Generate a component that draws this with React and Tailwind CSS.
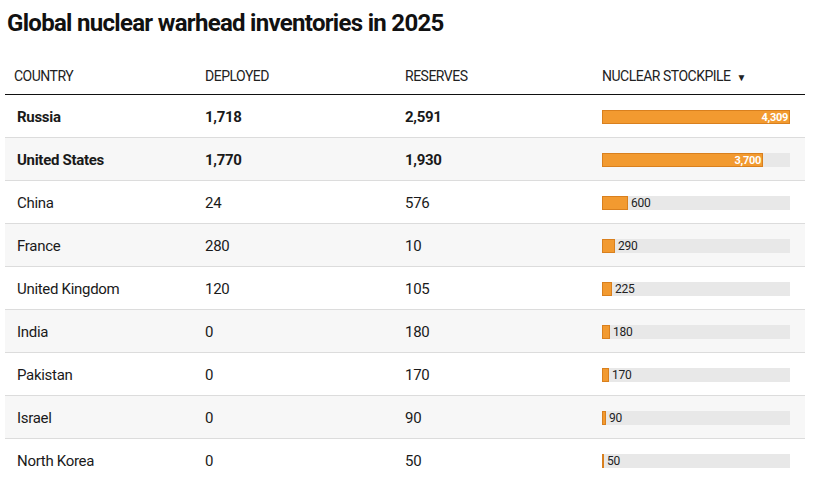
const rows = [
  { country: "Russia", deployed: "1,718", reserves: "2,591", total: 4309, bold: true },
  { country: "United States", deployed: "1,770", reserves: "1,930", total: 3700, bold: true },
  { country: "China", deployed: "24", reserves: "576", total: 600 },
  { country: "France", deployed: "280", reserves: "10", total: 290 },
  { country: "United Kingdom", deployed: "120", reserves: "105", total: 225 },
  { country: "India", deployed: "0", reserves: "180", total: 180 },
  { country: "Pakistan", deployed: "0", reserves: "170", total: 170 },
  { country: "Israel", deployed: "0", reserves: "90", total: 90 },
  { country: "North Korea", deployed: "0", reserves: "50", total: 50 },
];

const MAX = 4309;
const BAR_W = 188;

function StockBar({ total }) {
  const w = Math.max(2, Math.round((total / MAX) * BAR_W));
  const inside = total > 1000;
  return (
    <div className="relative h-[14px] w-[188px] bg-[#e8e8e8]">
      <div
        className="absolute left-0 top-0 h-full bg-[#f29a30] border border-[#d9801e]"
        style={{ width: w }}
      />
      {inside ? (
        <span
          className="absolute top-0 h-full flex items-center justify-end pr-[2px] text-[11px] font-bold text-white leading-none"
          style={{ width: w }}
        >
          {total.toLocaleString("en-US")}
        </span>
      ) : (
        <span
          className="absolute top-0 h-full flex items-center text-[12px] text-[#222] leading-none tracking-[-0.3px]"
          style={{ left: w + 3 }}
        >
          {total}
        </span>
      )}
    </div>
  );
}

export default function App() {
  return (
    <div
      className="w-[824px] h-[477px] overflow-hidden bg-white text-[#1a1a1a]"
      style={{ fontFamily: '"Roboto", "Liberation Sans", sans-serif' }}
    >
      <h1 className="pl-[7px] pt-[8px] text-[24px] font-bold leading-[30px] tracking-[-0.7px] text-[#111]">
        Global nuclear warhead inventories in 2025
      </h1>

      <div className="ml-[5px] mt-[23px] w-[800px]">
        <div className="grid grid-cols-[200px_200px_197px_203px] h-[34px] pt-[5px] items-start border-b border-[#111] text-[14px] tracking-[-0.5px] text-[#222] uppercase">
          <div className="pl-[9px]">Country</div>
          <div>Deployed</div>
          <div>Reserves</div>
          <div className="flex items-center gap-[6px]">
            Nuclear Stockpile
            <span className="text-[10px] mt-[2px]">▼</span>
          </div>
        </div>

        {rows.map((r, i) => (
          <div
            key={r.country}
            className={`grid grid-cols-[200px_200px_197px_203px] h-[43px] pt-[2px] items-center border-b border-[#dcdcdc] text-[15px] tracking-[-0.3px] ${
              i % 2 === 1 ? "bg-[#f7f7f7]" : "bg-white"
            } ${r.bold ? "font-bold" : ""}`}
          >
            <div className="pl-3">{r.country}</div>
            <div>{r.deployed}</div>
            <div>{r.reserves}</div>
            <div>
              <StockBar total={r.total} />
            </div>
          </div>
        ))}
      </div>
    </div>
  );
}
